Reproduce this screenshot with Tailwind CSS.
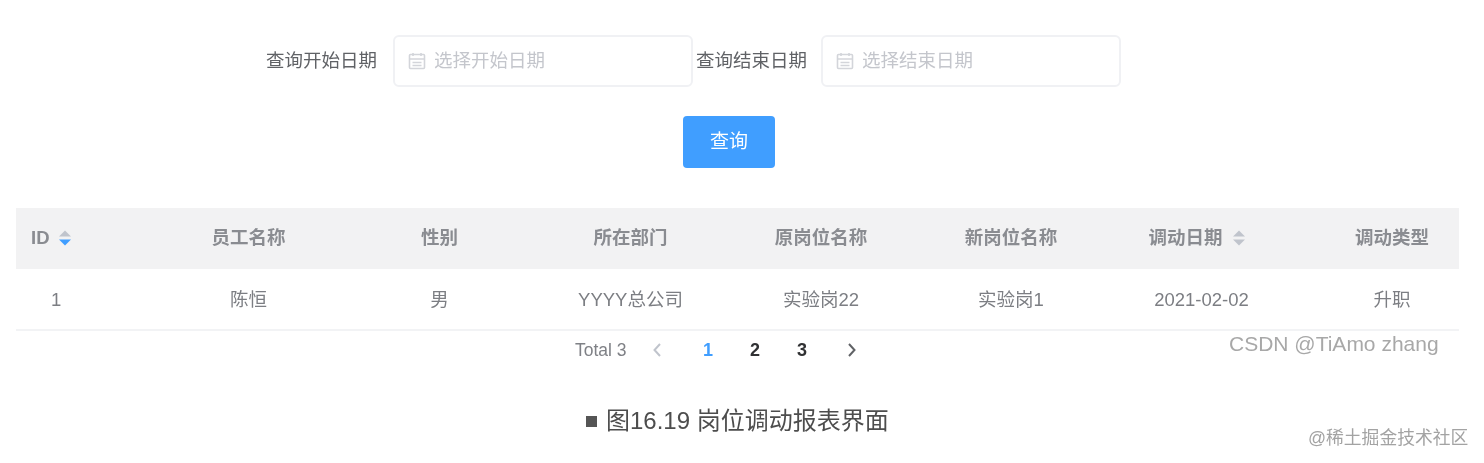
<!DOCTYPE html>
<html lang="en">
<head>
    <meta charset="UTF-8">
    <title>岗位调动报表</title>
    <script src="https://cdn.jsdelivr.net/npm/@tailwindcss/browser@4"></script>
</head>
<body class="bg-white font-['Liberation_Sans','Noto_Sans_CJK_SC',sans-serif] overflow-hidden">
    <div class="relative w-[1484px] h-[463px] overflow-hidden blur-[0.7px]">
        <!-- Search form -->
        <div class="flex items-center pt-[35px] pl-[266px] h-[87px]">
            <label class="w-[127px] text-[18.5px] text-[#606266]">查询开始日期</label>
            <div class="flex items-center w-[300px] h-[52px] pl-[13px] gap-[8px] border-2 border-[#f0f1f4] rounded-[6px]">
                <svg class="w-[18px] h-[18px] text-[#d3d5da]" viewBox="0 0 18 18" fill="none" stroke="currentColor" stroke-width="1.6"><rect x="1.5" y="2.5" width="15" height="14" rx="1"/><path d="M1.500 7h15M5 1v3M13 1v3M4.500 10.500h9M4.500 13.500h9"/></svg>
                <span class="text-[18.5px] text-[#c4c6cc]">选择开始日期</span>
            </div>
            <label class="w-[128px] pl-[3px] text-[18.5px] text-[#606266]">查询结束日期</label>
            <div class="flex items-center w-[300px] h-[52px] pl-[13px] gap-[8px] border-2 border-[#f0f1f4] rounded-[6px]">
                <svg class="w-[18px] h-[18px] text-[#d3d5da]" viewBox="0 0 18 18" fill="none" stroke="currentColor" stroke-width="1.6"><rect x="1.5" y="2.5" width="15" height="14" rx="1"/><path d="M1.500 7h15M5 1v3M13 1v3M4.500 10.500h9M4.500 13.500h9"/></svg>
                <span class="text-[18.5px] text-[#c4c6cc]">选择结束日期</span>
            </div>
        </div>
        <div class="pl-[683px] pt-[29px]">
            <button class="w-[92px] h-[52px] bg-[#409eff] text-white text-[19px] rounded-[4px]">查询</button>
        </div>

        <!-- Table -->
        <div class="mx-[16px] w-[1443px] mt-[40px]">
            <div class="grid grid-cols-[137px_191px_191px_191px_190px_190px_191px_162px] items-center h-[61px] pb-[2px] bg-[#f2f2f3] text-[18.5px] font-bold text-[#8a8c91] text-center">
                <div class="flex items-center gap-[8px] pl-[15px] text-left">
                    <span>ID</span>
                    <svg class="w-[14px] h-[20px]" viewBox="0 0 14 20"><path d="M7 2.500l6 6h-12z" fill="#c0c4cc"/><path d="M7 17.500l6-6h-12z" fill="#409eff"/></svg>
                </div>
                <div>员工名称</div>
                <div>性别</div>
                <div>所在部门</div>
                <div>原岗位名称</div>
                <div>新岗位名称</div>
                <div class="flex items-center justify-center gap-[9px] pr-[9px]">
                    <span>调动日期</span>
                    <svg class="w-[14px] h-[20px]" viewBox="0 0 14 20"><path d="M7 2.500l6 6h-12z" fill="#c0c4cc"/><path d="M7 17.500l6-6h-12z" fill="#c0c4cc"/></svg>
                </div>
                <div class="pl-[28px]">调动类型</div>
            </div>
            <div class="grid grid-cols-[137px_191px_191px_191px_190px_190px_191px_162px] items-center h-[62px] pt-[1px] border-b-2 border-[#f2f3f5] text-[18.5px] text-[#7c7e83] text-center">
                <div class="pl-[35px] text-left">1</div>
                <div>陈恒</div>
                <div>男</div>
                <div>YYYY总公司</div>
                <div>实验岗22</div>
                <div>实验岗1</div>
                <div>2021-02-02</div>
                <div class="pl-[28px]">升职</div>
            </div>
        </div>

        <!-- Pagination -->
        <div class="flex items-center h-[38px] pl-[575px] text-[18px] font-bold">
            <span class="w-[76px] text-[17.5px] font-normal text-[#7f8186]">Total 3</span>
            <svg class="w-[12px] h-[14px] text-[#c0c4cc]" viewBox="0 0 12 14" fill="none" stroke="currentColor" stroke-width="2"><path d="M9 1L3.500 7l5.500 6"/></svg>
            <span class="w-[47px] ml-[40px] text-[#409eff]">1</span>
            <span class="w-[47px] text-[#303133]">2</span>
            <span class="w-[49px] text-[#303133]">3</span>
            <svg class="w-[12px] h-[14px] text-[#606266]" viewBox="0 0 12 14" fill="none" stroke="currentColor" stroke-width="2"><path d="M3 1l5.500 6L3 13"/></svg>
        </div>

        <!-- Caption -->
        <div class="flex items-center gap-[9px] pl-[586px] pt-[35px] text-[24px] leading-[34px] text-[#4d4d4d]">
            <span class="w-[11px] h-[11px] bg-[#555555]"></span>
            <span>图16.19 岗位调动报表界面</span>
        </div>

        <!-- Watermarks over the picture -->
        <span class="absolute left-[1229px] top-[328px] text-[21px] text-[#a8a8a8]">CSDN @TiAmo zhang</span>
        <span class="absolute left-[1308px] top-[425px] text-[17.8px] text-[#a3a3a3]">@稀土掘金技术社区</span>
    </div>
</body>
</html>
